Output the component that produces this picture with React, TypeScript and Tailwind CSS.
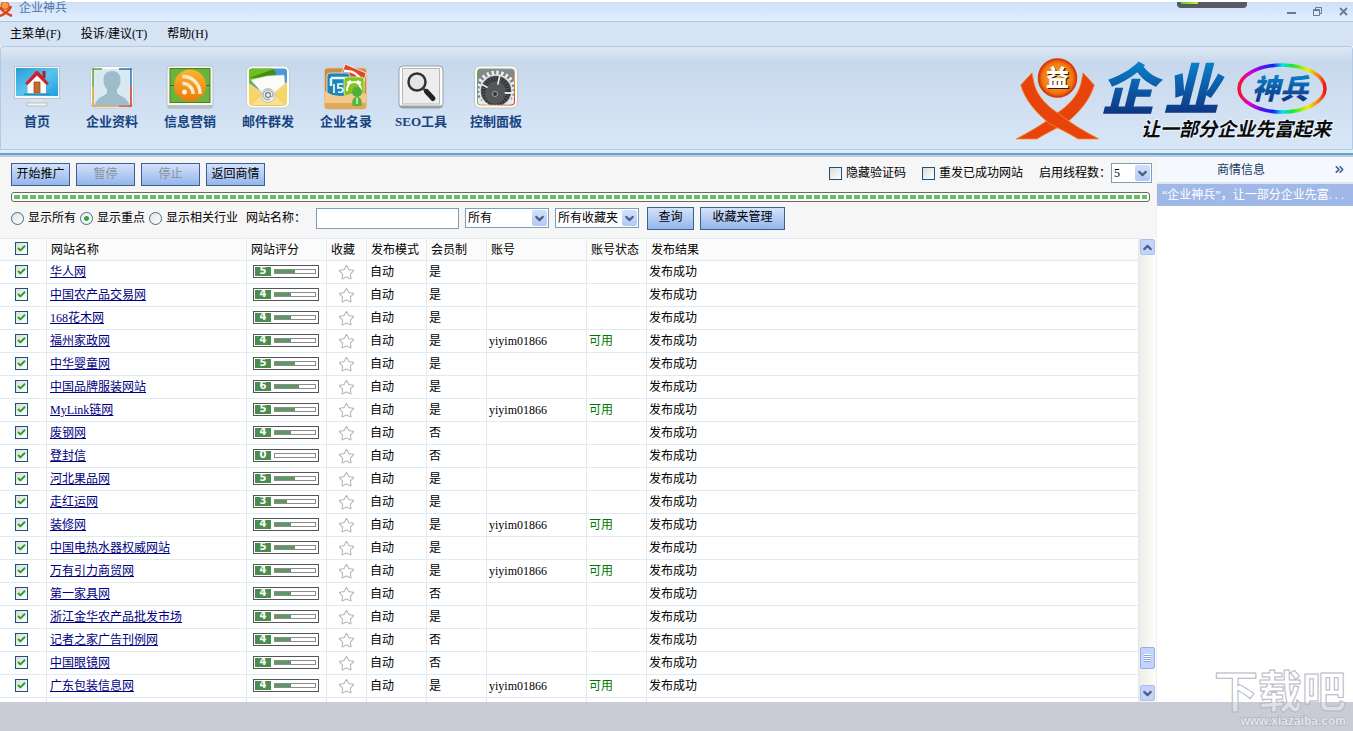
import React, { useState } from 'react';
import { Check, ChevronDown, ChevronUp, ChevronsRight, Star } from 'lucide-react';

interface Site {
  name: string;
  score: number;
  member: boolean;
  account?: string;
}

const SITES: Site[] = [
  { name: '华人网', score: 5, member: true },
  { name: '中国农产品交易网', score: 4, member: true },
  { name: '168花木网', score: 4, member: true },
  { name: '福州家政网', score: 4, member: true, account: 'yiyim01866' },
  { name: '中华婴童网', score: 5, member: true },
  { name: '中国品牌服装网站', score: 6, member: true },
  { name: 'MyLink链网', score: 5, member: true, account: 'yiyim01866' },
  { name: '废钢网', score: 4, member: false },
  { name: '登封信', score: 0, member: false },
  { name: '河北果品网', score: 5, member: true },
  { name: '走红运网', score: 3, member: true },
  { name: '装修网', score: 4, member: true, account: 'yiyim01866' },
  { name: '中国电热水器权威网站', score: 5, member: true },
  { name: '万有引力商贸网', score: 4, member: true, account: 'yiyim01866' },
  { name: '第一家具网', score: 4, member: false },
  { name: '浙江金华农产品批发市场', score: 4, member: true },
  { name: '记者之家广告刊例网', score: 4, member: false },
  { name: '中国眼镜网', score: 4, member: false },
  { name: '广东包装信息网', score: 4, member: true, account: 'yiyim01866' },
];

const COLUMNS = ['网站名称', '网站评分', '收藏', '发布模式', '会员制', '账号', '账号状态', '发布结果'];

/* ---------- ribbon icons ---------- */

const HomeIcon = () => (
  <svg width="46" height="44" viewBox="0 0 46 44">
    <defs>
      <linearGradient id="screen" x1="0" y1="0" x2="1" y2="1">
        <stop offset="0" stopColor="#2b9bd4" />
        <stop offset="0.5" stopColor="#58c4ee" />
        <stop offset="1" stopColor="#1f9fdc" />
      </linearGradient>
    </defs>
    <rect x="0.5" y="1.5" width="45" height="32" fill="#f4f8fb" stroke="#b5c3d2" />
    <rect x="2" y="3" width="42" height="28" fill="url(#screen)" />
    <rect x="17" y="34" width="12" height="4" fill="#dfe4ea" />
    <path d="M13 38h20v3H13z" fill="#f5f5f5" stroke="#a5adb8" strokeWidth="0.7" />
    <path d="M13.500 17 L22.500 9.500 L32 17 V28.500 H13.500Z" fill="#fbfbf7" />
    <path d="M28.500 6h3v7h-3z" fill="#b3202c" />
    <path d="M11 18.500 L22 6 H24 L35 18.500 L32.500 20 L23 10.500 L13.500 20Z" fill="#cf1f30" />
    <path d="M20 17h6v11h-6z" fill="#c96a2c" stroke="#8d4516" strokeWidth="0.7" />
    <path d="M10 28.500h26v1.500H10z" fill="#3f87b3" />
  </svg>
);

const ProfileIcon = () => (
  <svg width="46" height="44" viewBox="0 0 46 44">
    <rect x="1.500" y="1.500" width="43" height="41.500" rx="6" fill="#fdfefe" stroke="#c2ccd6" />
    <rect x="4.500" y="4" width="37" height="36.500" fill="#d8e9f2" />
    <path d="M4 22V4h9" stroke="#5f9f3a" strokeWidth="1.500" fill="none" />
    <path d="M30 4h12v17" stroke="#2c6fb4" strokeWidth="1.500" fill="none" />
    <path d="M42 21v20H30" stroke="#cc3224" strokeWidth="1.500" fill="none" />
    <path d="M30 41H4V22" stroke="#e0982c" strokeWidth="1.500" fill="none" />
    <path d="M23 6c-6 0-9 4-8.500 10 0 4 2 6 3.500 8.500V28c-2 3-10 3.500-12.500 12.500h35C38.500 31.500 30 31 28 28v-3.500c2-2.500 3.500-4.500 3.500-8.500C32 10 29 6 23 6Z" fill="#9fbccb" />
  </svg>
);

const RssIcon = () => (
  <svg width="48" height="44" viewBox="0 0 48 44">
    <defs>
      <linearGradient id="rssball" x1="0" y1="0" x2="0" y2="1">
        <stop offset="0" stopColor="#fbb530" />
        <stop offset="1" stopColor="#ea7a0c" />
      </linearGradient>
    </defs>
    <rect x="1" y="1" width="46" height="42" rx="3" fill="#f7f8f5" stroke="#bac3c8" />
    <path d="M1.500 40h45v2q0 1.500-2 1.500h-41q-2 0-2-1.500z" fill="#b9c0c4" />
    <rect x="4" y="3.500" width="40" height="34" fill="#6bb43c" stroke="#4b7f28" />
    <path d="M4 20.500h40" stroke="#3e6b22" />
    <circle cx="24" cy="20.500" r="16" fill="url(#rssball)" />
    <circle cx="18.500" cy="27" r="2.500" fill="#fff3dc" />
    <path d="M16.500 18.500a10 10 0 0 1 10.500 10.500M16.500 11.500a17 17 0 0 1 17.500 17.500" stroke="#ffe8c4" strokeWidth="3.500" fill="none" />
  </svg>
);

const MailIcon = () => (
  <svg width="46" height="44" viewBox="0 0 46 44">
    <rect x="1.500" y="1" width="43" height="42" rx="6" fill="#fdfdfb" stroke="#c3ccd2" />
    <rect x="4" y="3.500" width="38" height="22" rx="3" fill="#4c97d8" />
    <path d="M4 16V6q0-2.500 3-2.500h20L31 12 8 20z" fill="#6fc01f" />
    <path d="M4 13 29 4l3 8z" fill="#3f8f16" />
    <path d="M4 18 20 29h6l16-12v20q0 3.500-4 3.500H8q-4 0-4-3.500z" fill="#f8d568" />
    <path d="M6 15 22 11l17-1 1 9-16 13-4-1z" fill="#fbfbf7" stroke="#d5d8d2" strokeWidth="0.600" />
    <path d="M5 39.500 19 27h8l14 12.500q-1 1-3 1H8q-2 0-3-1z" fill="#fae08c" stroke="#e3b84a" strokeWidth="0.600" />
    <circle cx="23" cy="30.500" r="7" fill="#eef0ee" stroke="#bcc2c2" />
    <circle cx="23" cy="30" r="2.500" fill="none" stroke="#7d8688" strokeWidth="1.300" />
    <path d="M25.500 28v3.500q2 1.500 2.500-1.500a5 5 0 1 0-3 4.500" fill="none" stroke="#8f9799" />
  </svg>
);

const DirectoryIcon = () => (
  <svg width="46" height="48" viewBox="0 0 46 48" className="-mt-[2px]">
    <rect x="1.500" y="5" width="42" height="41" rx="3" fill="#c98f44" stroke="#e4c18c" />
    <path d="M22 1 43 10 39 26 17 17z" fill="#e2472c" stroke="#fff" strokeWidth="0.800" />
    <path d="M21 8q13-1 17 10" stroke="#fff" strokeWidth="2.500" fill="none" />
    <rect x="4" y="10" width="23" height="24" rx="3" fill="#1d86b8" stroke="#d9f1fb" strokeWidth="0.800" />
    <path d="M8 15h16M8 15v8M24 15v3" stroke="#e8f7fd" strokeWidth="2.500" />
    <path d="M11 21v9M20 21h-5v4q5-1 5 2t-5 2" stroke="#fff" strokeWidth="1.600" fill="none" />
    <rect x="21" y="14" width="20" height="19" rx="3" fill="#80c41c" stroke="#e2f5b5" strokeWidth="0.800" />
    <path d="M24 28q0-9 7-9t7 9M24 20l4-2M38 20l-4-2" stroke="#fff" strokeWidth="2" fill="none" />
    <path d="M2 28q10 7 22 4 12-5 19-1v12q0 3-3 3H5q-3 0-3-3z" fill="#f1c98a" />
    <path d="M2 40h41v3q0 3-3 3H5q-3 0-3-3z" fill="#dfa95c" />
    <circle cx="34" cy="29" r="5" fill="#4fae3a" />
    <path d="M29.500 43q-1.500-9 4.500-9t4.500 9z" fill="#55b33e" />
    <path d="M34 35v6" stroke="#d9f3cd" strokeWidth="1.500" />
  </svg>
);

const SearchIcon = () => (
  <svg width="46" height="44" viewBox="0 0 46 44">
    <rect x="1" y="1" width="44" height="42" rx="4" fill="#fbfbfb" stroke="#9aa1a8" />
    <path d="M1.500 40.500q0 2.500 3.500 2.500h36q3.500 0 3.500-2.500z" fill="#9aa0a6" />
    <rect x="4.500" y="3.500" width="37" height="35.500" fill="#ededed" stroke="#b6b9bd" />
    <circle cx="19" cy="17" r="8.500" fill="#e2e6e9" stroke="#333" strokeWidth="2.500" />
    <path d="M25 23.500 28 26" stroke="#444" strokeWidth="2.500" />
    <path d="M28.500 26.500 35 33.500" stroke="#222" strokeWidth="5" strokeLinecap="round" />
  </svg>
);

const PanelIcon = () => (
  <svg width="46" height="44" viewBox="0 0 46 44">
    <defs>
      <linearGradient id="rim" x1="0" y1="0" x2="1" y2="1">
        <stop offset="0" stopColor="#5bab3c" />
        <stop offset="0.35" stopColor="#6a9fc4" />
        <stop offset="0.65" stopColor="#e8a13a" />
        <stop offset="1" stopColor="#cc3324" />
      </linearGradient>
      <clipPath id="gearbox">
        <rect x="5" y="4.500" width="36" height="35" rx="3" />
      </clipPath>
    </defs>
    <rect x="1.500" y="1" width="43" height="42" rx="6" fill="#fcfcfa" stroke="#c8c8c2" />
    <rect x="4" y="3.500" width="38" height="37" rx="4" fill="url(#rim)" />
    <rect x="5" y="4.500" width="36" height="35" rx="3" fill="#85888a" />
    <g clipPath="url(#gearbox)">
      <circle cx="23" cy="26" r="18" fill="none" stroke="#f0f0f0" strokeWidth="5" strokeDasharray="2.300 2.400" />
      <circle cx="23" cy="26" r="16" fill="#55585b" stroke="#e2e2e2" strokeWidth="1.500" />
      <circle cx="23" cy="26" r="12" fill="none" stroke="#2f3133" strokeWidth="5" strokeDasharray="1.500 1.200" />
      <path d="M23 27 27 10M23 28H41M23 27 8 19" stroke="#e4e6e8" strokeWidth="1.800" />
      <circle cx="22" cy="29" r="10" fill="#54575a" />
      <circle cx="22" cy="29" r="2.500" fill="#303234" stroke="#a2a4a6" />
      <path d="M4 34l3-1 1 3 3-1 0 3 3 0 1 3H4zM42 34l-3-1-1 3-3-1 0 3-3 0-1 3h11z" fill="#e9e9e9" />
    </g>
  </svg>
);

const RIBBON = [
  { label: '首页', icon: <HomeIcon />, width: 'w-[46px]' },
  { label: '企业资料', icon: <ProfileIcon />, width: 'w-[52px]' },
  { label: '信息营销', icon: <RssIcon />, width: 'w-[52px]' },
  { label: '邮件群发', icon: <MailIcon />, width: 'w-[52px]' },
  { label: '企业名录', icon: <DirectoryIcon />, width: 'w-[52px]' },
  { label: 'SEO工具', icon: <SearchIcon />, width: 'w-[46px]' },
  { label: '控制面板', icon: <PanelIcon />, width: 'w-[52px]' },
];

const ARM =
  'M4.700 30 L16 17.700 L18 28 C21 41 31 51 42 58 C54 68 68 76 83 84 L62 84 C54 79 44 74 34 69 C20 58 9 45 4.700 30Z';

const BrandLogo = () => (
  <svg width="320" height="88" viewBox="0 0 320 88" className="shrink-0 overflow-visible">
    <defs>
      <linearGradient id="brandBlue" x1="0" y1="0" x2="0" y2="1">
        <stop offset="0.200" stopColor="#0a82cc" />
        <stop offset="0.900" stopColor="#0f2f7c" />
      </linearGradient>
      <radialGradient id="head">
        <stop offset="0" stopColor="#ffb62a" />
        <stop offset="0.800" stopColor="#f0780f" />
        <stop offset="1" stopColor="#dc3a0a" />
      </radialGradient>
      <linearGradient id="rainbow" x1="0" y1="0" x2="1" y2="0">
        <stop offset="0" stopColor="#f5142d" />
        <stop offset="0.120" stopColor="#e000c8" />
        <stop offset="0.270" stopColor="#5a10f0" />
        <stop offset="0.400" stopColor="#0a28ff" />
        <stop offset="0.500" stopColor="#00e0f5" />
        <stop offset="0.620" stopColor="#14e632" />
        <stop offset="0.800" stopColor="#f0f000" />
        <stop offset="0.930" stopColor="#f57814" />
        <stop offset="1" stopColor="#f01414" />
      </linearGradient>
    </defs>
    <g fill="#e9430c" stroke="#f58a2c" strokeWidth="0.800">
      <path d={ARM} transform="matrix(-1 0 0 1 83 0)" />
      <path d={ARM} />
    </g>
    <circle cx="41.500" cy="23" r="19" fill="url(#head)" stroke="#d4380c" strokeWidth="1.500" />
    <g fontFamily="'Noto Sans CJK SC', sans-serif" fontWeight="900">
      <text x="31" y="32" fontSize="23" fill="#3a1508">益</text>
      <text x="30" y="31" fontSize="23" fill="#fff">益</text>
      <g fontSize="56" fontStyle="italic" fill="url(#brandBlue)">
        <text x="84" y="55">企</text>
        <text x="147" y="55">业</text>
      </g>
      <text x="236" y="44" fontSize="28" fontStyle="italic" fill="url(#brandBlue)">神兵</text>
    </g>
    <ellipse cx="266" cy="33.500" rx="43" ry="23.500" fill="none" stroke="url(#rainbow)" strokeWidth="3.500" />
    <text
      x="125"
      y="81"
      fontSize="19"
      fontStyle="italic"
      fontWeight="700"
      fontFamily="'Noto Sans CJK SC', sans-serif"
      fill="#0a0a0a"
      stroke="#eaf2fb"
      strokeWidth="2"
      paintOrder="stroke"
    >
      让一部分企业先富起来
    </text>
  </svg>
);

/* ---------- small controls ---------- */

const CheckBox: React.FC<{ label: string; defaultChecked?: boolean; showLabel?: boolean }> = ({
  label,
  defaultChecked,
  showLabel,
}) => (
  <label className="inline-flex items-center gap-1">
    <span className="grid">
      <input
        type="checkbox"
        defaultChecked={defaultChecked}
        aria-label={showLabel ? undefined : label}
        className="peer col-start-1 row-start-1 size-[13px] appearance-none border border-[#1d5180] bg-linear-to-br from-[#dcdcd7] to-white"
      />
      <Check
        size={9}
        strokeWidth={5}
        className="pointer-events-none invisible col-start-1 row-start-1 m-[2px] text-[#21a121] peer-checked:visible"
      />
    </span>
    {showLabel && label}
  </label>
);

const DropDown: React.FC<{ label: string; options: string[]; className: string }> = ({ label, options, className }) => (
  <span className={`grid h-5 items-center ${className}`}>
    <select
      aria-label={label}
      className="col-start-1 row-start-1 h-5 w-full appearance-none border border-[#7f9db9] bg-white pl-[2px] text-[12px] leading-4"
    >
      {options.map((o) => (
        <option key={o}>{o}</option>
      ))}
    </select>
    <span className="pointer-events-none col-start-1 row-start-1 mr-[2px] flex h-4 w-[15px] items-center justify-center justify-self-end rounded-[2px] bg-linear-to-b from-[#d3e0fd] to-[#b4c8f6] text-[#4d6185]">
      <ChevronDown size={13} strokeWidth={4} />
    </span>
  </span>
);

const XpButton: React.FC<{ className: string; disabled?: boolean; children: React.ReactNode }> = ({
  className,
  disabled,
  children,
}) => (
  <button
    type="button"
    disabled={disabled}
    className={`h-[23px] border border-[#3c5f92] bg-linear-to-b from-[#d3e2fa] to-[#94b6ea] pb-[2px] text-[12px] leading-4 whitespace-nowrap disabled:text-[#8b919b] ${className}`}
  >
    {children}
  </button>
);

const ScoreBar: React.FC<{ score: number }> = ({ score }) => (
  <div className="flex h-[13px] w-[66px] items-center gap-[3px] border border-[#555] bg-white px-px">
    <span className="flex h-[9px] w-4 items-center justify-center bg-[#4b8c50] font-['DejaVu_Sans'] text-[10px] leading-none font-bold text-white">
      {score}
    </span>
    <span className="h-[5px] w-[42px] border border-[#8c8c8c]">
      <span className="block h-full bg-[#5a9a5e]" style={{ width: `${score * 10}%` }} />
    </span>
  </div>
);

const CELL = 'h-[23px] border-r border-b border-[#e1e9f1] p-0';

const SiteRow: React.FC<{ site: Site }> = ({ site }) => (
  <tr>
    <td className={`${CELL} pb-[2px] pl-[15px]`}>
      <div className="flex">
        <CheckBox label={site.name} defaultChecked />
      </div>
    </td>
    <td className={`${CELL} pl-[3px]`}>
      <a href="#" className="text-[#00007f] underline">{site.name}</a>
    </td>
    <td className={`${CELL} pb-[2px] pl-[6px]`}>
      <ScoreBar score={site.score} />
    </td>
    <td className={CELL}>
      <Star size={17} strokeWidth={1.5} className="mx-auto text-[#b4b4b4]" />
    </td>
    <td className={`${CELL} pl-[3px]`}>自动</td>
    <td className={`${CELL} pl-[2px]`}>{site.member ? '是' : '否'}</td>
    <td className={`${CELL} pl-[2px]`}>{site.account}</td>
    <td className={`${CELL} pl-[2px] text-[#007800]`}>{site.account && '可用'}</td>
    <td className={`${CELL} pl-[2px]`}>发布成功</td>
  </tr>
);

const FILTERS = ['显示所有', '显示重点', '显示相关行业'];

export default function App() {
  const [filter, setFilter] = useState('显示重点');

  return (
    <div className="relative flex h-screen flex-col overflow-hidden bg-white pt-[2px] font-['Liberation_Serif','Noto_Sans_CJK_SC',sans-serif] text-[12px] leading-4 text-black">
      {/* Title bar */}
      <header className="flex h-5 shrink-0 justify-between border-b border-[#a9c6e2] bg-linear-to-b from-[#cfdffa] to-[#e2effe]">
        <div className="flex h-[14px] items-center gap-[6px] text-[#4b74a8]">
          <svg width="13" height="15" viewBox="0 0 13 15">
            <circle cx="5" cy="3.500" r="4" fill="#f3a04a" stroke="#dd4a14" />
            <path d="M0 5q1 4 12 9M11 4Q9 10 0 14" stroke="#de4411" strokeWidth="2.500" fill="none" />
          </svg>
          <h1 className="pb-[3px]">企业神兵</h1>
        </div>
        <div className="flex gap-[17px] pr-[5px] text-[#6a7a90]">
          <button type="button" aria-label="最小化">
            <svg width="9" height="9" viewBox="0 0 9 9"><path d="M0 6h9" stroke="currentColor" strokeWidth="2" /></svg>
          </button>
          <button type="button" aria-label="还原">
            <svg width="9" height="9" viewBox="0 0 9 9" fill="none" stroke="currentColor">
              <path d="M2.500 2.500v-2h6v6h-2M0.500 2.500h6v6h-6zM0.500 3.500h6" />
            </svg>
          </button>
          <button type="button" aria-label="关闭">
            <svg width="9" height="9" viewBox="0 0 9 9"><path d="M1 1l7 7M8 1 1 8" stroke="currentColor" strokeWidth="1.800" /></svg>
          </button>
        </div>
      </header>

      {/* Capture tool peeking in from the top edge */}
      <div className="absolute top-[2px] right-[106px] h-[6px] w-[70px] rounded-b-[4px] bg-[#565b63] pl-1">
        <div className="h-[2px] w-[17px] bg-linear-to-r from-[#35d435] to-[#c8e632]" />
      </div>

      {/* Menu */}
      <nav className="flex h-6 shrink-0 items-center gap-[20px] bg-[#d6e3f3] pl-[10px]">
        <button type="button">主菜单(F)</button>
        <button type="button">投诉/建议(T)</button>
        <button type="button">帮助(H)</button>
      </nav>

      {/* Ribbon */}
      <section className="flex h-[104px] shrink-0 items-start justify-between rounded-t-[3px] border border-[#b3cae2] bg-linear-to-b from-[#dde8f5] from-0% via-[#c8d8ec] via-15% to-[#d8e7f7] pr-4 pl-[13px]">
        <div className="flex gap-[26px] pt-[18px]">
          {RIBBON.map((item) => (
            <button
              key={item.label}
              type="button"
              className={`flex flex-col items-center text-[13px] leading-4 font-bold whitespace-nowrap text-[#174480] ${item.width}`}
            >
              <span className="flex h-[49px] items-start">{item.icon}</span>
              {item.label}
            </button>
          ))}
        </div>
        <div className="pt-[8px]">
          <BrandLogo />
        </div>
      </section>
      <div className="h-[7px] shrink-0 border-t-[3px] border-b-2 border-t-[#dcf0fb] border-b-[#bccce6] bg-[#6d9dc9]" />

      <div className="flex min-h-0 flex-1">
        <main className="flex min-w-0 flex-1 flex-col bg-[#f6f6f6]">
          {/* Actions */}
          <div className="flex h-[35px] shrink-0 items-center gap-[6px] pr-1 pl-[11px]">
            <XpButton className="w-[59px]">开始推广</XpButton>
            <XpButton className="w-[59px]" disabled>暂停</XpButton>
            <XpButton className="w-[59px]" disabled>停止</XpButton>
            <XpButton className="w-[59px]">返回商情</XpButton>
            <div className="ml-auto flex items-center gap-4 pb-[3px]">
              <CheckBox label="隐藏验证码" showLabel />
              <CheckBox label="重发已成功网站" showLabel />
              <div className="flex items-center">
                启用线程数：
                <DropDown label="启用线程数" options={['5', '10']} className="w-[41px]" />
              </div>
            </div>
          </div>

          <div
            role="progressbar"
            aria-label="推广进度"
            aria-valuenow={100}
            className="mr-[6px] ml-[11px] flex h-[10px] shrink-0 items-center rounded-[3px] border border-[#686868] bg-white px-[2px]"
          >
            <div className="h-1 w-full bg-[repeating-linear-gradient(90deg,#5fc25f_0_6px,#fff_6px_8px)]" />
          </div>

          {/* Filters */}
          <form className="flex h-[36px] shrink-0 items-center pb-[4px] pl-[11px]" onSubmit={(e) => e.preventDefault()}>
            <div className="flex gap-1">
              {FILTERS.map((f) => (
                <label key={f} className="flex items-center gap-1 whitespace-nowrap">
                  <input
                    type="radio"
                    name="filter"
                    checked={filter === f}
                    onChange={() => setFilter(f)}
                    className="size-[13px] appearance-none rounded-full border border-[#3b6a96] bg-linear-to-br from-[#e0e0dc] to-white checked:bg-[radial-gradient(circle,#2faa2f_0_2px,#f4f8f4_3px)]"
                  />
                  {f}
                </label>
              ))}
            </div>
            <label htmlFor="site-name" className="ml-2 w-[70px] whitespace-nowrap">网站名称：</label>
            <input id="site-name" type="text" className="h-[21px] w-[143px] border border-[#7f9db9] bg-white px-1" />
            <DropDown label="网站类型" options={['所有']} className="ml-[6px] w-[84px]" />
            <DropDown label="收藏夹" options={['所有收藏夹']} className="ml-[6px] w-[84px]" />
            <XpButton className="ml-2 w-[47px]">查询</XpButton>
            <XpButton className="ml-[6px] w-[85px]">收藏夹管理</XpButton>
          </form>

          {/* Site list */}
          <div className="flex min-h-0 flex-1 bg-white">
            <div className="min-w-0 flex-1 overflow-hidden">
              <table className="w-full table-fixed border-separate border-spacing-0 border-t border-[#e1e9f1] text-left whitespace-nowrap">
                <colgroup>
                  <col className="w-[47px]" />
                  <col className="w-[200px]" />
                  <col className="w-20" />
                  <col className="w-10" />
                  <col className="w-[60px]" />
                  <col className="w-[60px]" />
                  <col className="w-[100px]" />
                  <col className="w-[60px]" />
                  <col />
                </colgroup>
                <thead className="bg-[#fbfbfb]">
                  <tr>
                    <th className="h-[22px] border-r border-b border-[#e1e9f1] p-0 pb-[2px] pl-[15px]">
                      <div className="flex">
                        <CheckBox label="全选" defaultChecked />
                      </div>
                    </th>
                    {COLUMNS.map((c) => (
                      <th key={c} className="h-[22px] border-r border-b border-[#e1e9f1] p-0 pl-1 font-normal">{c}</th>
                    ))}
                  </tr>
                </thead>
                <tbody>
                  {SITES.map((site) => (
                    <SiteRow key={site.name} site={site} />
                  ))}
                  <tr aria-hidden="true">
                    {[0, 1, 2, 3, 4, 5, 6, 7, 8].map((i) => (
                      <td key={i} className={CELL}>
                        {i === 3 && <Star size={17} strokeWidth={1.5} className="mx-auto text-[#b4b4b4]" />}
                      </td>
                    ))}
                  </tr>
                </tbody>
              </table>
            </div>
            <div className="flex w-[17px] shrink-0 flex-col bg-linear-to-r from-[#eeede5] to-[#fdfdfa] p-px text-[#4d6185]">
              <button type="button" aria-label="向上" className="flex h-4 items-center justify-center rounded-[2px] border border-[#a9bfe8] bg-[#c3d3fb]">
                <ChevronUp size={13} strokeWidth={4} />
              </button>
              <div className="flex flex-1 flex-col justify-end pb-4">
                <div className="flex h-[22px] flex-col items-center justify-center rounded-[2px] border border-[#98b0e4] bg-[#c3d3fb]">
                  <div className="h-2 w-[7px] bg-[repeating-linear-gradient(180deg,#fff_0_1px,#8ba5e0_1px_2px)]" />
                </div>
              </div>
              <button type="button" aria-label="向下" className="flex h-4 items-center justify-center rounded-[2px] border border-[#a9bfe8] bg-[#c3d3fb]">
                <ChevronDown size={13} strokeWidth={4} />
              </button>
            </div>
          </div>
        </main>

        {/* Business info */}
        <aside className="w-[197px] shrink-0 border-l border-[#eef1f5]">
          <div className="flex h-[27px] items-center gap-2 border-b-2 border-[#dfe7f3] bg-[#f5f9fe] pr-[7px] text-[#173a5e]">
            <h2 className="flex-1 text-center">商情信息</h2>
            <button type="button" aria-label="展开" className="text-[#37598f]">
              <ChevronsRight size={13} strokeWidth={3} />
            </button>
          </div>
          <a href="#" className="block bg-[#9fb8e8] px-[5px] leading-[22px] whitespace-nowrap text-white">
            “企业神兵”，让一部分企业先富. . .
          </a>
        </aside>
      </div>

      <footer className="h-[29px] shrink-0 bg-[#c9ccd7]" />

      {/* Watermark */}
      <div className="pointer-events-none absolute right-[7px] bottom-1 flex flex-col items-end font-['Liberation_Sans','Noto_Sans_CJK_SC',sans-serif] font-bold whitespace-nowrap">
        <span className="text-[44px] leading-[44px] text-white/40 [-webkit-text-stroke:1px_#b5b7bd]">下载吧</span>
        <span className="text-[12px] leading-3 text-[#e4e6eb] [-webkit-text-stroke:1px_#a4a7b0] [paint-order:stroke]">
          www.xiazaiba.com
        </span>
      </div>
    </div>
  );
}
